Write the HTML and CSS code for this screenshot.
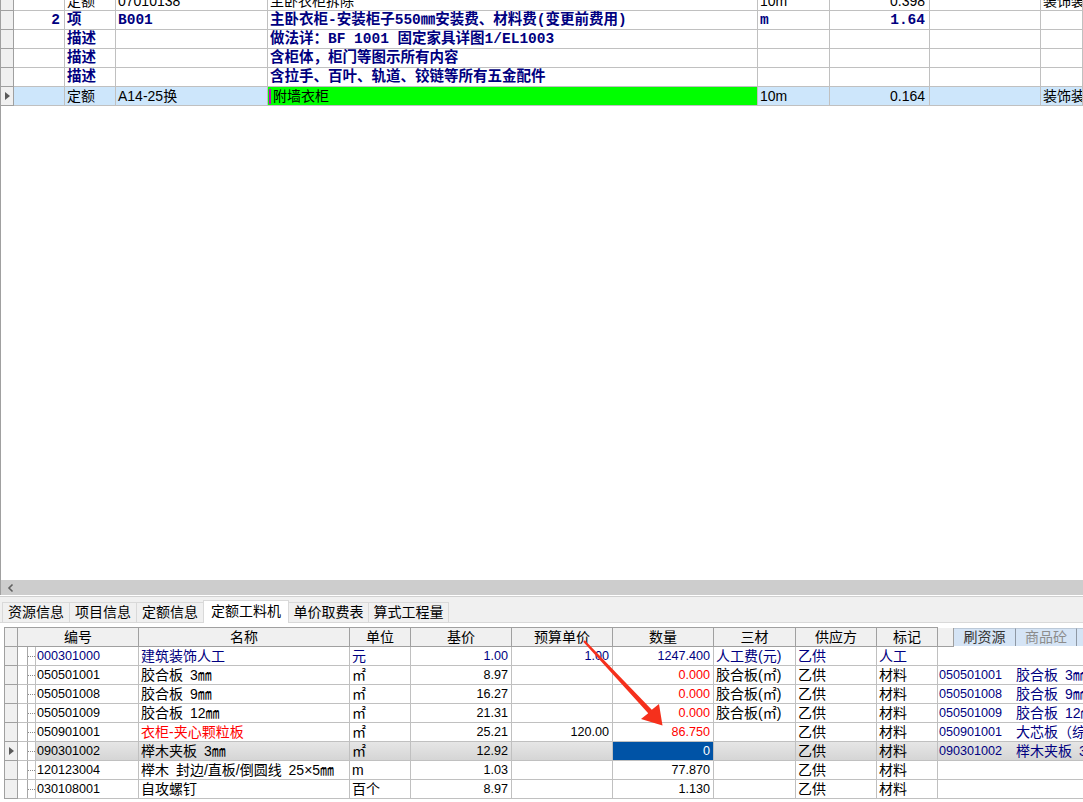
FILE: index.html
```html
<!DOCTYPE html>
<html lang="zh-CN">
<head>
<meta charset="utf-8">
<title>定额工料机</title>
<link rel="stylesheet" href="styles.css">
</head>
<body>
<div class="app">
  <div class="top">
    <div class="tgrid">
      <div class="trow">
        <div class="g"></div><div></div><div>定额</div><div>07010138</div><div>主卧衣柜拆除</div><div>10m</div><div class="r">0.398</div><div></div><div>装饰装</div>
      </div>
      <div class="trow bold">
        <div class="g"></div><div class="r">2</div><div>项</div><div>B001</div><div>主卧衣柜-安装柜子550㎜安装费、材料费(变更前费用)</div><div>m</div><div class="r">1.64</div><div></div><div></div>
      </div>
      <div class="trow bold">
        <div class="g"></div><div></div><div>描述</div><div></div><div>做法详：BF 1001 固定家具详图1/EL1003</div><div></div><div></div><div></div><div></div>
      </div>
      <div class="trow bold">
        <div class="g"></div><div></div><div>描述</div><div></div><div>含柜体，柜门等图示所有内容</div><div></div><div></div><div></div><div></div>
      </div>
      <div class="trow bold">
        <div class="g"></div><div></div><div>描述</div><div></div><div>含拉手、百叶、轨道、铰链等所有五金配件</div><div></div><div></div><div></div><div></div>
      </div>
      <div class="trow sel">
        <div class="g"><span class="tri"></span></div><div></div><div>定额</div><div>A14-25换</div><div class="green"><span class="caret"></span>附墙衣柜</div><div>10m</div><div class="r">0.164</div><div></div><div>装饰装</div>
      </div>
    </div>
  </div>
  <div class="hscroll">
    <svg width="8" height="10" viewBox="0 0 8 10"><polyline points="5.5,1.5 2,5 5.5,8.5" fill="none" stroke="#606060" stroke-width="1.6"/></svg>
  </div>
  <div class="sep"></div>
  <div class="tabs">
    <div class="tab">资源信息</div>
    <div class="tab">项目信息</div>
    <div class="tab">定额信息</div>
    <div class="tab on">定额工料机</div>
    <div class="tab w5">单价取费表</div>
    <div class="tab w5">算式工程量</div>
  </div>
  <div class="bottom">
    <div class="bgrid">
      <div class="brow head">
        <div class="bg"></div>
        <div class="span2">编号</div>
        <div>名称</div>
        <div>单位</div>
        <div>基价</div>
        <div>预算单价</div>
        <div>数量</div>
        <div>三材</div>
        <div>供应方</div>
        <div>标记</div>
        <div class="rh">
          <div class="rh-pad"></div>
          <div class="rtab">刷资源</div>
          <div class="rtab dim">商品砼</div>
          <div class="rtab last"></div>
        </div>
      </div>

      <div class="brow navy">
        <div class="bg"></div><div class="tr"></div>
        <div class="n">000301000</div><div>建筑装饰人工</div><div>元</div>
        <div class="n r">1.00</div><div class="n r">1.00</div><div class="n r">1247.400</div>
        <div>人工费(元)</div><div>乙供</div><div>人工</div>
        <div class="rp"></div>
      </div>

      <div class="brow">
        <div class="bg"></div><div class="tr"></div>
        <div class="n">050501001</div><div>胶合板 3㎜</div><div>㎡</div>
        <div class="n r">8.97</div><div class="n r"></div><div class="n r red">0.000</div>
        <div>胶合板(㎡)</div><div>乙供</div><div>材料</div>
        <div class="rp"><span class="rc n">050501001</span><span>胶合板 3㎜</span></div>
      </div>

      <div class="brow">
        <div class="bg"></div><div class="tr"></div>
        <div class="n">050501008</div><div>胶合板 9㎜</div><div>㎡</div>
        <div class="n r">16.27</div><div class="n r"></div><div class="n r red">0.000</div>
        <div>胶合板(㎡)</div><div>乙供</div><div>材料</div>
        <div class="rp"><span class="rc n">050501008</span><span>胶合板 9㎜</span></div>
      </div>

      <div class="brow">
        <div class="bg"></div><div class="tr"></div>
        <div class="n">050501009</div><div>胶合板 12㎜</div><div>㎡</div>
        <div class="n r">21.31</div><div class="n r"></div><div class="n r red">0.000</div>
        <div>胶合板(㎡)</div><div>乙供</div><div>材料</div>
        <div class="rp"><span class="rc n">050501009</span><span>胶合板 12㎜</span></div>
      </div>

      <div class="brow">
        <div class="bg"></div><div class="tr"></div>
        <div class="n">050901001</div><div class="red">衣柜-夹心颗粒板</div><div>㎡</div>
        <div class="n r">25.21</div><div class="n r">120.00</div><div class="n r red">86.750</div>
        <div></div><div>乙供</div><div>材料</div>
        <div class="rp"><span class="rc n">050901001</span><span>大芯板（综合）</span></div>
      </div>

      <div class="brow sel">
        <div class="bg"><span class="tri"></span></div><div class="tr"></div>
        <div class="n">090301002</div><div>榉木夹板 3㎜</div><div>㎡</div>
        <div class="n r">12.92</div><div class="n r"></div><div class="n r qsel">0</div>
        <div></div><div>乙供</div><div>材料</div>
        <div class="rp"><span class="rc n">090301002</span><span>榉木夹板 3㎜</span></div>
      </div>

      <div class="brow">
        <div class="bg"></div><div class="tr"></div>
        <div class="n">120123004</div><div>榉木 封边/直板/倒圆线 25×5㎜</div><div>m</div>
        <div class="n r">1.03</div><div class="n r"></div><div class="n r">77.870</div>
        <div></div><div>乙供</div><div>材料</div>
        <div class="rp"></div>
      </div>

      <div class="brow">
        <div class="bg"></div><div class="tr"></div>
        <div class="n">030108001</div><div>自攻螺钉</div><div>百个</div>
        <div class="n r">8.97</div><div class="n r"></div><div class="n r">1.130</div>
        <div></div><div>乙供</div><div>材料</div>
        <div class="rp"></div>
      </div>
    </div>
  </div>

  <svg class="arrow" width="1083" height="802" viewBox="0 0 1083 802">
    <polygon points="584.8,640.2 651.8,709.8 659,704 662.5,725.5 641,719 648.2,713.2 583.2,641.8" fill="#f5301c"/>
  </svg>
</div>
</body>
</html>
```

FILE: styles.css
```css
html, body {
  margin: 0;
  padding: 0;
  background: #fff;
}

body {
  font-family: "Liberation Sans", "Noto Sans CJK SC", sans-serif;
  font-size: 14px;
  color: #000;
}

.app {
  position: relative;
  width: 1083px;
  height: 802px;
  overflow: hidden;
  display: flex;
  flex-direction: column;
}

/* ---------- upper grid ---------- */
.top {
  flex: none;
  height: 580px;
  border-left: 1px solid #a0a0a0;
  overflow: hidden;
  box-sizing: border-box;
}

.tgrid {
  margin-top: -8px;
}

.trow {
  display: grid;
  grid-template-columns: 13px 51px 51px 152px 490px 72px 100px 111px 1fr;
  height: 19px;
}

.trow > div {
  box-sizing: border-box;
  border-right: 1px solid #c0c0c0;
  border-bottom: 1px solid #c0c0c0;
  line-height: 18px;
  padding: 0 2px;
  white-space: nowrap;
  overflow: hidden;
}

.trow > .g {
  background: #f0f0f0;
  border-right-color: #a0a0a0;
  border-bottom-color: #a0a0a0;
  padding: 0;
  display: flex;
  align-items: center;
  justify-content: center;
}

.trow > .r {
  text-align: right;
  padding-right: 4px;
}

.trow.bold > div {
  font-family: "Liberation Mono", "Noto Sans CJK SC", sans-serif;
  font-weight: bold;
  color: #000080;
  font-size: 14.5px;
}

.trow.sel > div {
  background: #cde6fb;
}

.trow.sel > .g {
  background: #f0f0f0;
}

.trow.sel > .green {
  background: #00ff00;
  padding-left: 1px;
}

.caret {
  display: inline-block;
  width: 2px;
  height: 15px;
  background: #c000c0;
  vertical-align: -3px;
  margin-right: 2px;
}

.tri {
  display: block;
  width: 0;
  height: 0;
  border-left: 5px solid #5a5a5a;
  border-top: 4px solid transparent;
  border-bottom: 4px solid transparent;
}

/* ---------- scrollbar / tabs ---------- */
.hscroll {
  flex: none;
  height: 15px;
  background: #cdcdcd;
  border-left: 1px solid #a0a0a0;
  display: flex;
  align-items: center;
  padding-left: 6px;
}

.hscroll svg {
  display: block;
}

.sep {
  flex: none;
  height: 2px;
  background: #fff;
  border-bottom: 1px solid #d0d0d0;
  box-sizing: border-box;
}

.tabs {
  flex: none;
  height: 25px;
  background: #f0f0f0;
  display: flex;
  align-items: flex-end;
  padding-left: 2px;
}

.tab {
  box-sizing: border-box;
  height: 20px;
  width: 68px;
  border: 1px solid #d9d9d9;
  border-bottom: none;
  margin-right: -1px;
  text-align: center;
  line-height: 19px;
  white-space: nowrap;
}

.tab.w5 {
  width: 81px;
}

.tab.on {
  width: 86px;
  height: 23px;
  background: #fff;
  margin-bottom: -1px;
  line-height: 21px;
  position: relative;
  z-index: 1;
}

/* ---------- lower grid ---------- */
.bottom {
  flex: 1;
  background: #fff;
  border-top: 1px solid #d9d9d9;
  padding: 4px 0 0 4px;
}

.bgrid {
  border-left: 1px solid #a0a0a0;
}

.brow {
  display: grid;
  grid-template-columns: 13px 18px 103px 211px 61px 101px 101px 101px 82px 81px 61px 1fr;
  height: 19px;
}

.brow > div {
  box-sizing: border-box;
  border-right: 1px solid #c0c0c0;
  border-bottom: 1px solid #c0c0c0;
  line-height: 18px;
  padding: 0 2px;
  white-space: nowrap;
  overflow: hidden;
  word-spacing: 3px;
}

.brow > .n {
  font-size: 12.6px;
  padding-left: 1px;
}

.brow > .r {
  text-align: right;
  padding-right: 3px;
}

.brow > .bg {
  background: #f0f0f0;
  border-right-color: #a0a0a0;
  border-bottom-color: #a0a0a0;
  padding: 0;
  display: flex;
  align-items: center;
  justify-content: center;
}

.brow > .tr {
  padding: 0;
  background-image:
    linear-gradient(#a8a8a8, #a8a8a8),
    repeating-linear-gradient(to right, #8a8a8a 0 1px, transparent 1px 2px);
  background-repeat: no-repeat;
  background-size: 1px 100%, 8px 1px;
  background-position: 9px 0, 10px 9px;
}

.brow.head {
  height: 20px;
}

.brow.head > div {
  background: #f0f0f0;
  border-top: 1px solid #a0a0a0;
  border-right-color: #a0a0a0;
  border-bottom-color: #a0a0a0;
  text-align: center;
  line-height: 18px;
}

.brow.head > .span2 {
  grid-column: span 2;
}

.brow.head > .rh {
  background: #fff;
  border-top: none;
  border-right: none;
  border-bottom: none;
  padding: 1px 0 0 0;
  display: flex;
  align-items: stretch;
  text-align: left;
}

.rh-pad {
  width: 15px;
  height: 18px;
  background: #f0f0f0;
  border-right: 1px solid #a0a0a0;
  border-bottom: 1px solid #a0a0a0;
  flex: none;
}

.rtab {
  flex: none;
  box-sizing: border-box;
  width: 62px;
  height: 18px;
  background: #d5e4f5;
  border-top: 1px solid #bcc9d8;
  border-right: 1px solid #8e98a4;
  text-align: center;
  line-height: 16px;
  color: #333;
}

.rtab.dim {
  color: #8c8c8c;
  width: 61px;
}

.rtab.last {
  width: 20px;
  border-right: none;
}

.brow > .rp {
  border-right: none;
  padding-left: 1px;
  display: flex;
  color: #000080;
}

.rp .rc {
  width: 77px;
  flex: none;
  font-size: 12.6px;
}

.navy > div {
  color: #000080;
}

.brow > .red {
  color: #ff0000;
}

.brow.sel > div:not(.bg):not(.tr) {
  background: linear-gradient(#e6e6e6, #d5d5d5);
}

.brow.sel > div.qsel:not(.bg):not(.tr) {
  background: #0053a6;
  color: #fff;
}

.arrow {
  position: absolute;
  left: 0;
  top: 0;
  pointer-events: none;
}
```
